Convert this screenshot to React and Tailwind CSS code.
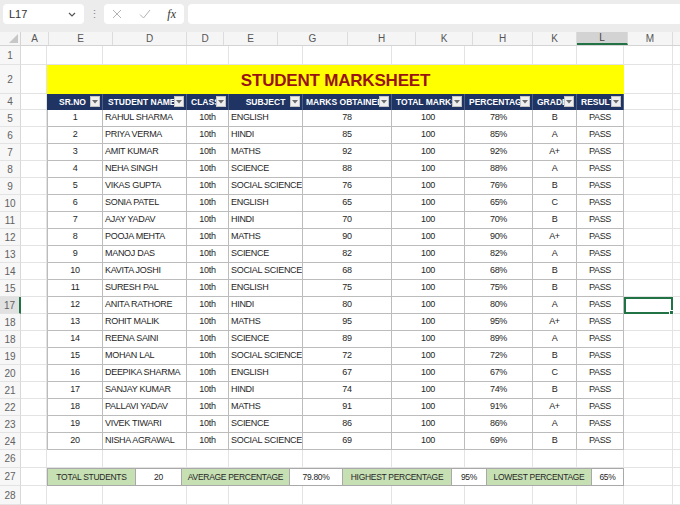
import React from 'react';

const W = ['w-[56px]', 'w-[84px]', 'w-[42px]', 'w-[74px]', 'w-[89px]', 'w-[73px]', 'w-[68px]', 'w-[44px]', 'w-[47px]'];
const HEAD = ['SR.NO', 'STUDENT NAME', 'CLASS', 'SUBJECT', 'MARKS OBTAINED', 'TOTAL MARKS', 'PERCENTAGE', 'GRADE', 'RESULT'];
const HEAD_ALIGN = ['justify-center pr-[4px]', 'justify-start pl-[5px]', 'justify-start pl-[4px]', 'justify-center', 'justify-start pl-[3px]', 'justify-start pl-[4px]', 'justify-start pl-[4px]', 'justify-start pl-[4px]', 'justify-start pl-[4px]'];
const DATA_ALIGN = ['justify-center', 'justify-start pl-[2px]', 'justify-center', 'justify-start pl-[2px]', 'justify-center', 'justify-center', 'justify-center', 'justify-center', 'justify-center'];

// row labels as they show in the sheet
const rowLabels = [5, 6, 7, 8, 9, 10, 11, 12, 13, 14, 15, 17, 18, 18, 19, 20, 21, 22, 23, 24];

const students = [
  ['RAHUL SHARMA', 'ENGLISH', 78, 'B'],
  ['PRIYA VERMA', 'HINDI', 85, 'A'],
  ['AMIT KUMAR', 'MATHS', 92, 'A+'],
  ['NEHA SINGH', 'SCIENCE', 88, 'A'],
  ['VIKAS GUPTA', 'SOCIAL SCIENCE', 76, 'B'],
  ['SONIA PATEL', 'ENGLISH', 65, 'C'],
  ['AJAY YADAV', 'HINDI', 70, 'B'],
  ['POOJA MEHTA', 'MATHS', 90, 'A+'],
  ['MANOJ DAS', 'SCIENCE', 82, 'A'],
  ['KAVITA JOSHI', 'SOCIAL SCIENCE', 68, 'B'],
  ['SURESH PAL', 'ENGLISH', 75, 'B'],
  ['ANITA RATHORE', 'HINDI', 80, 'A'],
  ['ROHIT MALIK', 'MATHS', 95, 'A+'],
  ['REENA SAINI', 'SCIENCE', 89, 'A'],
  ['MOHAN LAL', 'SOCIAL SCIENCE', 72, 'B'],
  ['DEEPIKA SHARMA', 'ENGLISH', 67, 'C'],
  ['SANJAY KUMAR', 'HINDI', 74, 'B'],
  ['PALLAVI YADAV', 'MATHS', 91, 'A+'],
  ['VIVEK TIWARI', 'SCIENCE', 86, 'A'],
  ['NISHA AGRAWAL', 'SOCIAL SCIENCE', 69, 'B'],
];

const summary = [
  ['w-[89px]', 'TOTAL STUDENTS', true],
  ['w-[46px]', '20', false],
  ['w-[108px]', 'AVERAGE PERCENTAGE', true],
  ['w-[53px]', '79.80%', false],
  ['w-[109px]', 'HIGHEST PERCENTAGE', true],
  ['w-[35px]', '95%', false],
  ['w-[105px]', 'LOWEST PERCENTAGE', true],
  ['w-[32px]', '65%', false],
];

// column letters of the sheet header
const letters = [
  ['w-[28px]', 'A'], ['w-[64px]', 'E'], ['w-[74px]', 'D'], ['w-[37px]', 'D'], ['w-[54px]', 'E'],
  ['w-[70px]', 'G'], ['w-[68px]', 'H'], ['w-[57px]', 'K'], ['w-[60px]', 'H'], ['w-[44px]', 'K'],
  ['w-[51px]', 'L'], ['w-[45px]', 'M'],
];

const SheetRow = ({ num, h, active, children }) => (
  <div className={`flex ${h}`}>
    <div
      className={`w-[21px] shrink-0 flex items-center justify-center text-[10px] border-b border-b-[#e3e3e3] ${
        active ? 'bg-[#e1e1e1] text-[#5f5f5f] border-r-2 border-r-[#217346]' : 'bg-[#f7f7f7] text-[#616161] border-r border-r-[#d8d8d8]'
      }`}
    >
      {num}
    </div>
    <div className="w-[26px] shrink-0 border-r border-b border-[#e3e3e3]" />
    {children}
  </div>
);

const Filler = ({ selected }) => (
  <>
    <div className={`w-[49px] shrink-0 relative ${selected ? 'border-2 border-[#217346]' : 'border-r border-b border-[#e3e3e3]'}`}>
      {selected && <div className="absolute -right-[3px] -bottom-[3px] w-[5px] h-[5px] bg-[#217346] border border-white" />}
    </div>
    <div className="flex-1 border-b border-[#e3e3e3]" />
  </>
);

const EmptyCells = () => (
  <>
    {W.map((w, i) => (
      <div key={i} className={`${w} shrink-0 border-r border-b border-[#e3e3e3]`} />
    ))}
    <Filler />
  </>
);

const Dropdown = () => (
  <div className="absolute right-[2px] top-[2px] w-[10px] h-[11px] bg-[#efefef] border border-[#c4c4c4] flex items-center justify-center">
    <svg width="6" height="4" viewBox="0 0 6 4">
      <path d="M0 0 L6 0 L3 3.5 Z" fill="#6b6b6b" />
    </svg>
  </div>
);

export default function App() {
  return (
    <div className="w-[680px] h-[505px] overflow-hidden bg-white font-['Liberation_Sans',sans-serif]">
      {/* formula bar */}
      <div className="h-[32px] bg-[#ececec] flex items-start pt-[4px] pl-[3px]">
        <div className="w-[81px] h-[20px] bg-white rounded-[4px] flex items-center justify-between pl-[6px] pr-[8px] text-[11px] text-[#333]">
          <span>L17</span>
          <svg width="8" height="5" viewBox="0 0 8 5">
            <path d="M1 1 L4 4 L7 1" fill="none" stroke="#555" strokeWidth="1.2" />
          </svg>
        </div>
        <div className="w-[20px] h-[20px] flex items-center justify-center text-[#888] text-[11px]">⋮</div>
        <div className="w-[80px] h-[20px] bg-white rounded-[4px] flex items-center justify-between px-[8px]">
          <svg width="10" height="10" viewBox="0 0 10 10">
            <path d="M1 1 L9 9 M9 1 L1 9" stroke="#b3b3b3" strokeWidth="1" />
          </svg>
          <svg width="12" height="10" viewBox="0 0 12 10">
            <path d="M1 5.5 L4.5 9 L11 1" fill="none" stroke="#b3b3b3" strokeWidth="1" />
          </svg>
          <span className="italic font-['Liberation_Serif',serif] text-[12px] text-[#333]">fx</span>
        </div>
        <div className="flex-1 h-[20px] bg-white rounded-l-[4px] ml-[4px]" />
      </div>

      {/* column letters */}
      <div className="flex h-[14px] bg-[#f5f5f5] border-b border-[#d4d4d4] text-[10px] text-[#555]">
        <div className="w-[21px] shrink-0 relative border-r border-[#d4d4d4]">
          <svg className="absolute right-[2px] bottom-[2px]" width="9" height="9" viewBox="0 0 9 9">
            <path d="M9 0 L9 9 L0 9 Z" fill="#c7c7c7" />
          </svg>
        </div>
        {letters.map(([w, l], i) => (
          <div
            key={i}
            className={`${w} shrink-0 flex items-center justify-center border-r border-[#dcdcdc] ${
              i === 10 ? 'bg-[#d3d3d3] border-b-2 border-b-[#217346] text-[#444]' : ''
            }`}
          >
            {l}
          </div>
        ))}
        <div className="flex-1" />
      </div>

      {/* row 1 */}
      <SheetRow num="1" h="h-[19px]">
        <EmptyCells />
      </SheetRow>

      {/* row 2: title */}
      <SheetRow num="2" h="h-[29px]">
        <div className="w-[577px] shrink-0 bg-[#ffff00] flex items-center justify-center pt-[2px] text-[17px] font-bold text-[#981313] tracking-[-0.2px]">
          STUDENT MARKSHEET
        </div>
        <Filler />
      </SheetRow>

      {/* row 4: header */}
      <SheetRow num="4" h="h-[16px]">
        {HEAD.map((t, i) => (
          <div
            key={i}
            className={`${W[i]} shrink-0 relative overflow-hidden whitespace-nowrap bg-[#1f3463] border-r border-[#4a5d85] flex items-center ${HEAD_ALIGN[i]} text-[8.5px] font-bold text-white`}
          >
            <span>{t}</span>
            <Dropdown />
          </div>
        ))}
        <Filler />
      </SheetRow>

      {/* data rows */}
      {students.map(([name, subject, marks, grade], r) => {
        const vals = [r + 1, name, '10th', subject, marks, 100, `${marks}%`, grade, 'PASS'];
        const active = r === 11;
        return (
          <SheetRow key={r} num={rowLabels[r]} h="h-[17px]" active={active}>
            {vals.map((v, i) => (
              <div
                key={i}
                className={`${W[i]} shrink-0 border-r border-b border-[#bcbcbc] ${i === 0 ? 'border-l' : ''} flex items-center ${DATA_ALIGN[i]} text-[9px] tracking-[-0.3px] text-[#262626] whitespace-nowrap overflow-hidden`}
              >
                {v}
              </div>
            ))}
            <Filler selected={active} />
          </SheetRow>
        );
      })}

      {/* row 26 */}
      <SheetRow num="26" h="h-[18px]">
        <EmptyCells />
      </SheetRow>

      {/* row 27: summary */}
      <SheetRow num="27" h="h-[18px]">
        {summary.map(([w, t, green], i) => (
          <div
            key={i}
            className={`${w} shrink-0 border-t border-r border-b border-[#a9a9a9] ${i === 0 ? 'border-l' : ''} ${
              green ? 'bg-[#c6e0b4]' : 'bg-white'
            } flex items-center justify-center text-[8.5px] tracking-[-0.3px] text-[#262626] whitespace-nowrap`}
          >
            {t}
          </div>
        ))}
        <Filler />
      </SheetRow>

      {/* row 28 */}
      <SheetRow num="28" h="h-[19px]">
        <EmptyCells />
      </SheetRow>
    </div>
  );
}
